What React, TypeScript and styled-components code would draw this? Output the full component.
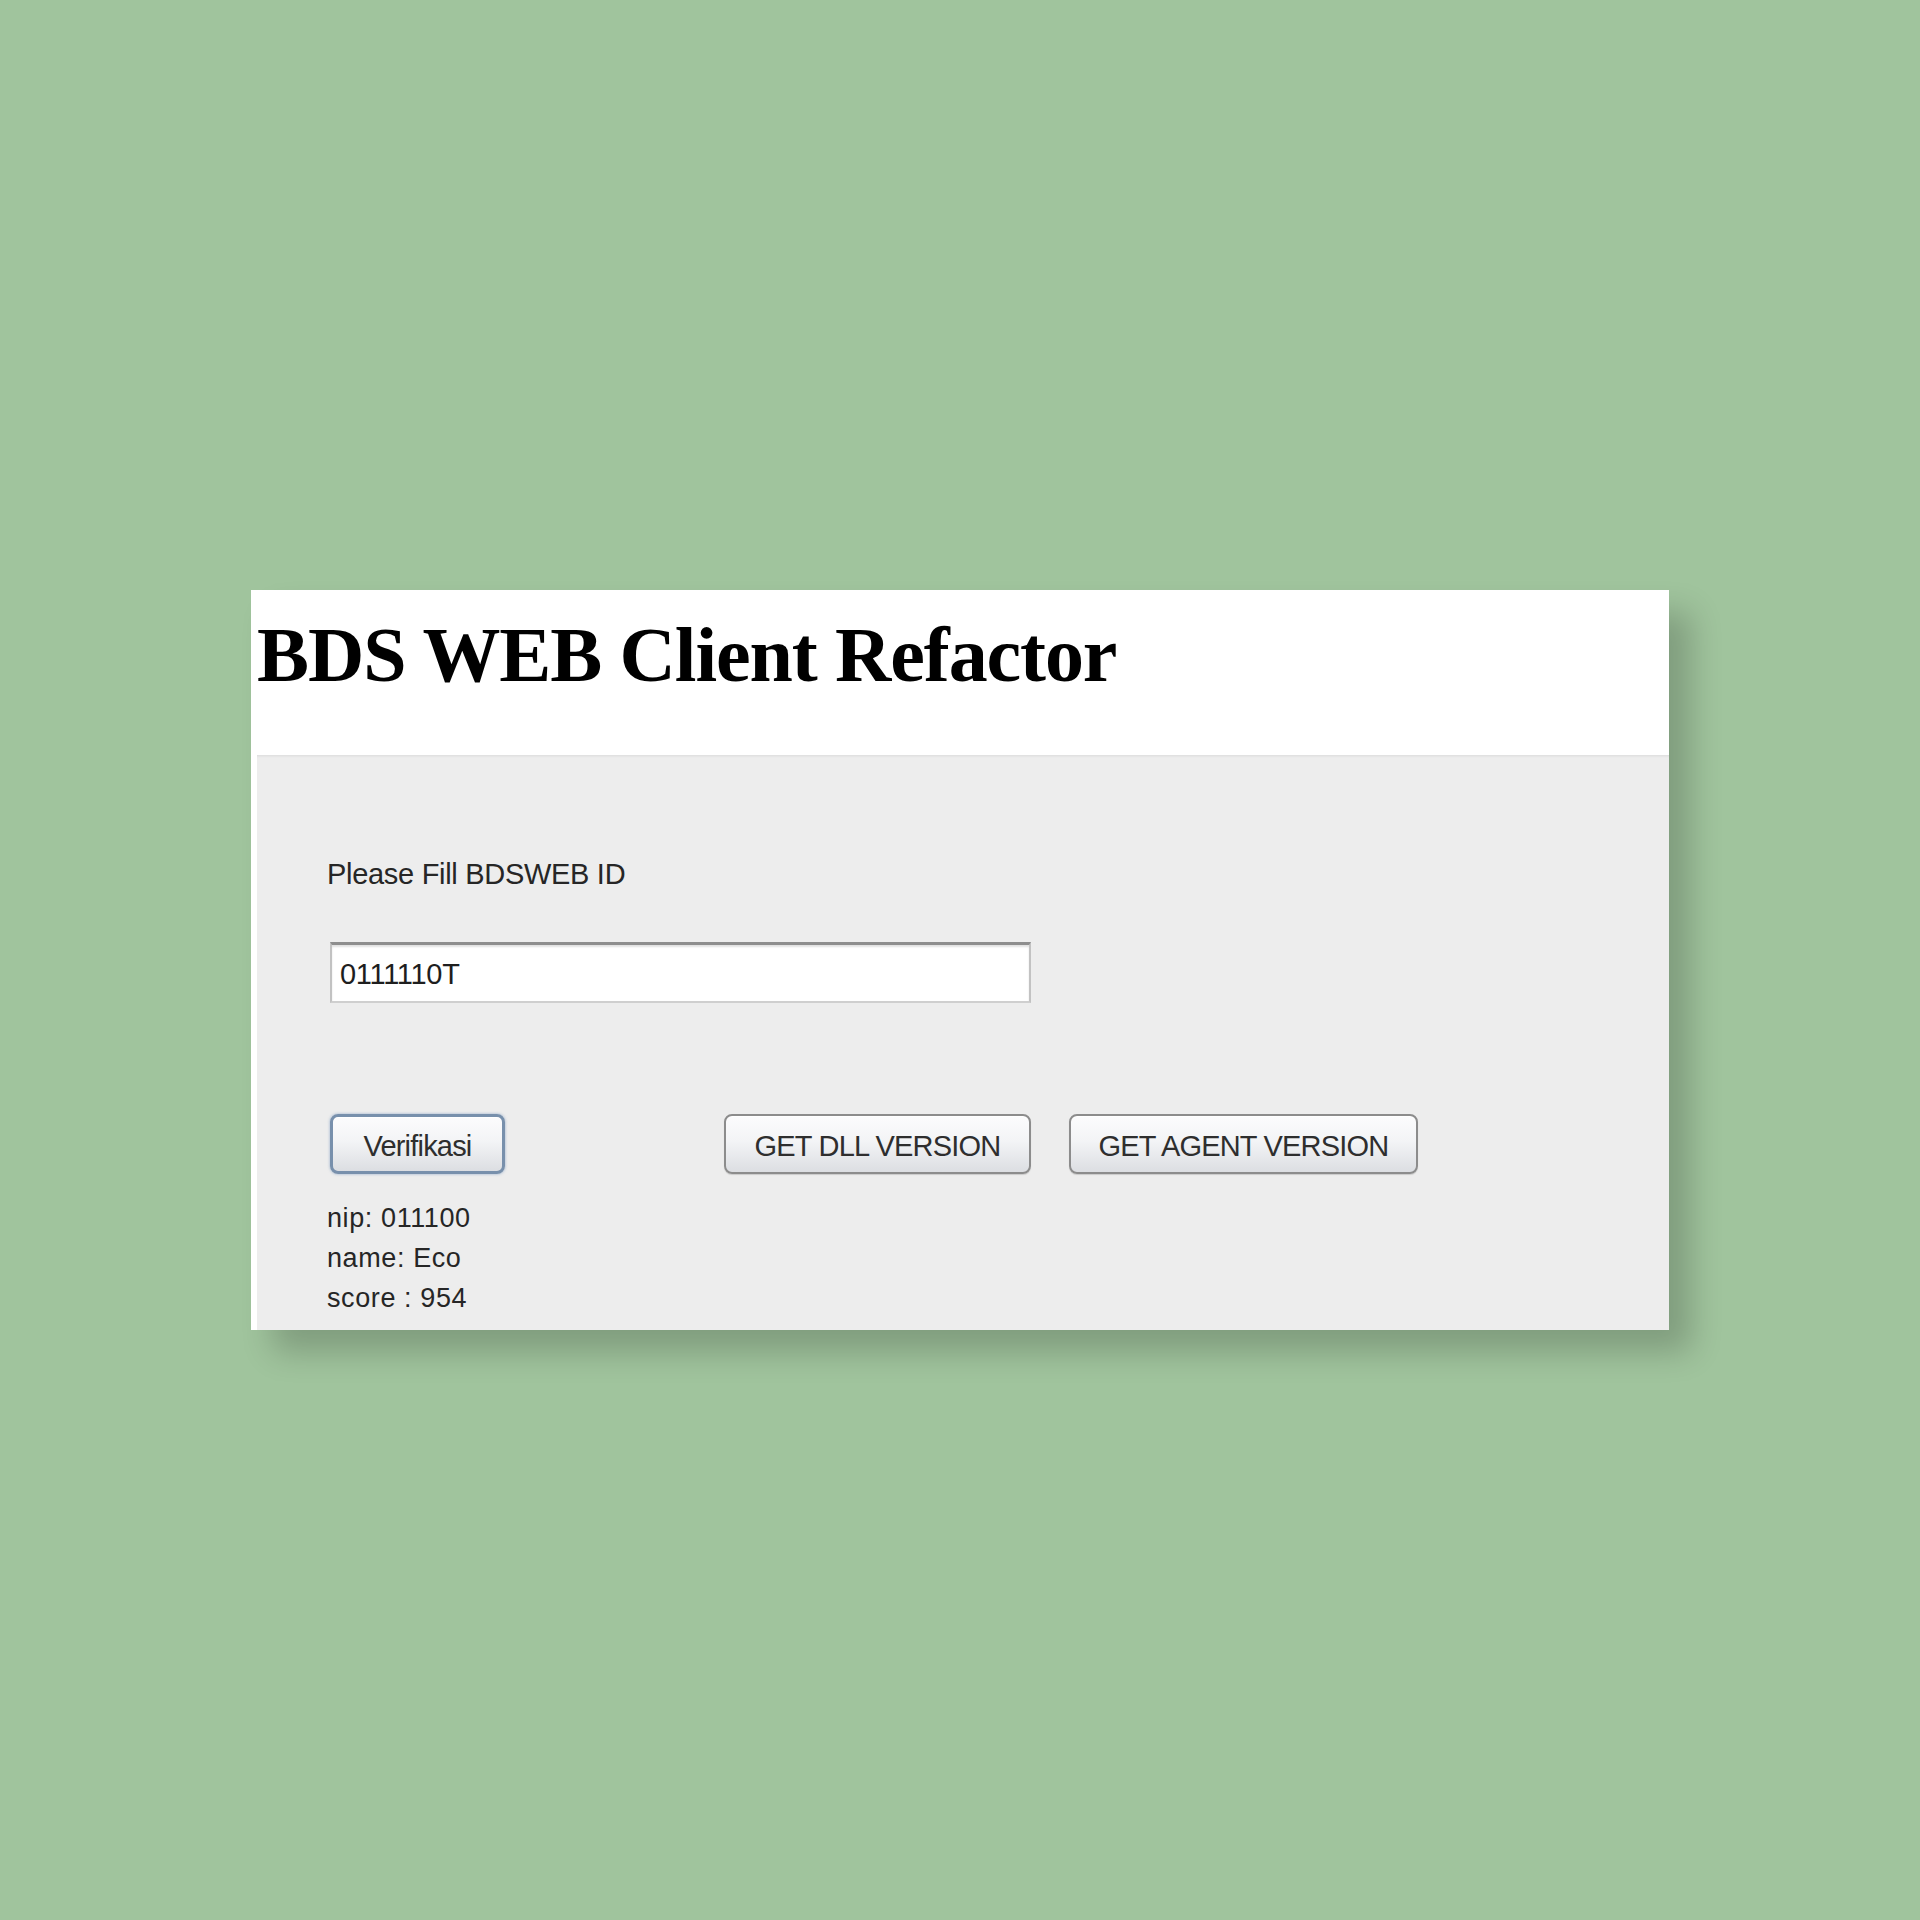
import styled, { createGlobalStyle } from "styled-components";

const GlobalStyle = createGlobalStyle`
  html, body {
    margin: 0;
    padding: 0;
    background-color: #a0c49d;
  }
`;

const Page = styled.div`
  width: 1920px;
  height: 1920px;
  padding: 590px 0 0 251px;
  box-sizing: border-box;
`;

const Card = styled.div`
  width: 1418px;
  height: 740px;
  display: flex;
  flex-direction: column;
  background-color: #ffffff;
  box-shadow: 22px 22px 30px rgba(0, 0, 0, 0.2);
`;

const Header = styled.div`
  height: 165px;
  padding-left: 6px;
  flex-shrink: 0;
`;

const Title = styled.h1`
  margin: 0;
  padding-top: 20px;
  font-family: "Liberation Serif", "Times New Roman", serif;
  font-weight: bold;
  font-size: 78px;
  line-height: 90px;
  letter-spacing: -1.1px;
  color: #000000;
`;

const Body = styled.div`
  flex: 1;
  margin-left: 6px;
  padding: 101px 0 0 73px;
  background-color: #ededed;
  box-shadow: inset 0 3px 3px -2px rgba(0, 0, 0, 0.08);
  display: flex;
  flex-direction: column;
  align-items: flex-start;
`;

const Label = styled.div`
  margin-left: -3px;
  font-family: "Liberation Sans", Arial, sans-serif;
  font-size: 29px;
  line-height: 36px;
  letter-spacing: -0.3px;
  color: #262626;
`;

const IdInput = styled.input`
  margin-top: 50px;
  width: 701px;
  height: 61px;
  box-sizing: border-box;
  padding: 2px 8px 0;
  border-style: solid;
  border-width: 3px 2px 2px 2px;
  border-color: #8e8e8e #c2c2c2 #cfcfcf #c2c2c2;
  box-shadow: inset 0 2px 2px rgba(0, 0, 0, 0.12);
  background-color: #ffffff;
  font-family: "Liberation Sans", Arial, sans-serif;
  font-size: 29px;
  letter-spacing: -0.3px;
  color: #1e1e1e;
  outline: none;
`;

const ButtonRow = styled.div`
  margin-top: 111px;
  display: flex;
  align-items: center;
`;

const Button = styled.button<{ focused?: boolean; width: number; gap?: number }>`
  width: ${(props) => props.width}px;
  height: 60px;
  margin-left: ${(props) => props.gap ?? 0}px;
  box-sizing: border-box;
  border-radius: 8px;
  border: ${(props) => (props.focused ? "3px solid #7890ac" : "2px solid #8c8c8c")};
  background: linear-gradient(to bottom, #fcfcfd 0%, #f3f4f6 45%, #dcdee2 100%);
  box-shadow: ${(props) =>
    props.focused
      ? "0 0 3px rgba(90, 130, 180, 0.6), inset 0 1px 0 #ffffff"
      : "0 1px 1px rgba(0, 0, 0, 0.15), inset 0 1px 0 #ffffff"};
  font-family: "Liberation Sans", Arial, sans-serif;
  font-size: 29px;
  letter-spacing: -0.8px;
  color: #2e2e2e;
  padding: 4px 0 0;
`;

const Results = styled.div`
  margin-top: 24px;
  margin-left: -3px;
  font-family: "Liberation Sans", Arial, sans-serif;
  font-size: 27px;
  line-height: 40px;
  letter-spacing: 0.6px;
  color: #262626;
`;

const ResultLine = styled.div``;

function App() {
  return (
    <>
      <GlobalStyle />
      <Page>
        <Card>
          <Header>
            <Title>BDS WEB Client Refactor</Title>
          </Header>
          <Body>
            <Label>Please Fill BDSWEB ID</Label>
            <IdInput defaultValue="0111110T" />
            <ButtonRow>
              <Button focused width={175}>Verifikasi</Button>
              <Button width={307} gap={219}>GET DLL VERSION</Button>
              <Button width={349} gap={38}>GET AGENT VERSION</Button>
            </ButtonRow>
            <Results>
              <ResultLine>nip: 011100</ResultLine>
              <ResultLine>name: Eco</ResultLine>
              <ResultLine>score : 954</ResultLine>
            </Results>
          </Body>
        </Card>
      </Page>
    </>
  );
}

export default App;
